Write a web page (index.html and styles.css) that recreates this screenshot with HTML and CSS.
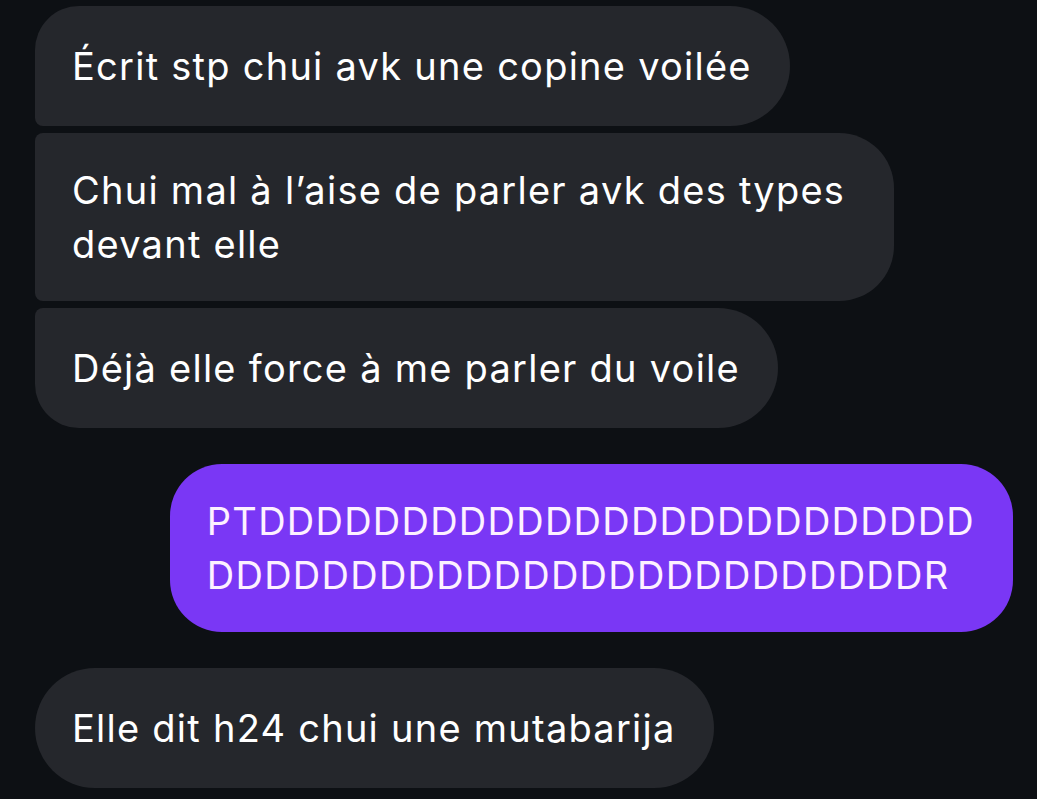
FILE: index.html
```html
<!DOCTYPE html>
<html lang="fr">
<head>
<meta charset="utf-8">
<title>Messages</title>
<link rel="stylesheet" href="styles.css">
</head>
<body>
<main class="thread">
  <div class="group group-in">
    <div class="bubble in first">Écrit stp chui avk une copine voilée</div>
    <div class="bubble in middle">Chui mal à l’aise de parler avk des types<br>devant elle</div>
    <div class="bubble in last">Déjà elle force à me parler du voile</div>
  </div>
  <div class="group group-out">
    <div class="bubble out">PTDDDDDDDDDDDDDDDDDDDDDDDDD<br>DDDDDDDDDDDDDDDDDDDDDDDDDR</div>
  </div>
  <div class="group group-in">
    <div class="bubble in single">Elle dit h24 chui une mutabarija</div>
  </div>
</main>
</body>
</html>
```

FILE: styles.css
```css
html, body {
  margin: 0;
  padding: 0;
  background: #0d1014;
  height: 100%;
}

body {
  font-family: Inter, "Noto Sans", "Liberation Sans", sans-serif;
  color: #ffffff;
  overflow: hidden;
}

.thread {
  display: flex;
  flex-direction: column;
  gap: 36px;
  padding: 6px 24px 0 35px;
}

.group {
  display: flex;
  flex-direction: column;
  gap: 7px;
}

.group-in {
  align-items: flex-start;
}

.group-out {
  align-items: flex-end;
}

.bubble {
  box-sizing: border-box;
  min-height: 120px;
  padding: 30px 38px 30px 37px;
  display: flex;
  align-items: center;
  font-size: 38px;
  line-height: 54px;
  letter-spacing: 1.25px;
  white-space: nowrap;
}

.in {
  background: #25272c;
}

.first {
  border-radius: 44px 60px 60px 8px;
}

.middle {
  padding-right: 49px;
  border-radius: 8px 55px 55px 8px;
}

.last {
  border-radius: 8px 60px 60px 44px;
}

.single {
  border-radius: 60px;
}

.out {
  background: #7a37f5;
  color: #fdf1ff;
  border-radius: 52px;
}
```
